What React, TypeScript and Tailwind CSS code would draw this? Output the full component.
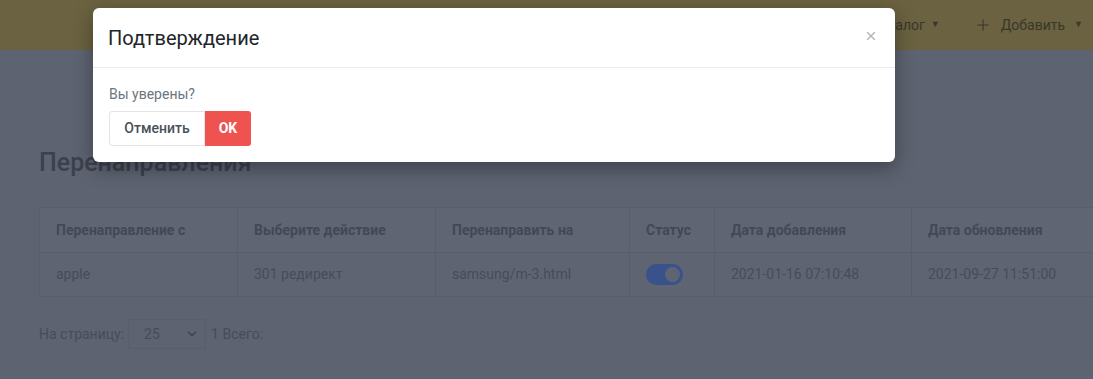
import { ChevronDown, Plus, X } from 'lucide-react';

const columns = [
  { title: 'Перенаправление с', w: 'w-[197px]' },
  { title: 'Выберите действие', w: 'w-[198px]' },
  { title: 'Перенаправить на', w: 'w-[194px]' },
  { title: 'Статус', w: 'w-[85px]' },
  { title: 'Дата добавления', w: 'w-[197px]' },
  { title: 'Дата обновления', w: 'w-[200px]' },
];

const Toggle = () => (
  <div className="w-[37px] h-[21px] rounded-full bg-[#39528c] flex items-center justify-end px-[3px]">
    <div className="w-[15px] h-[15px] rounded-full bg-[#5f6473]" />
  </div>
);

const App = () => {
  return (
    <div className="relative w-[1093px] h-[379px] overflow-hidden bg-[#5e6371] font-['Roboto',sans-serif]">
      {/* Navbar (dimmed) */}
      <div className="h-[50px] bg-[#6a6240] flex items-center justify-end pr-[10px] text-[14px] text-[#39382a]">
        <div className="flex items-center gap-[6px] mr-[34px]">
          <span>Каталог</span>
          <span className="text-[9px]">▼</span>
        </div>
        <div className="flex items-center gap-[9px]">
          <Plus className="w-[18px] h-[18px]" strokeWidth={1.5} />
          <span>Добавить</span>
          <span className="text-[9px]">▼</span>
        </div>
      </div>

      {/* Page content (dimmed) */}
      <div className="pl-[39px] pt-[98px]">
        <h1 className="text-[25px] leading-[30px] font-medium text-[#3c414e]">Перенаправления</h1>

        <div className="mt-[29px] border border-[#595e6c] w-max bg-[#606574]">
          <div className="flex border-b border-[#595e6c] h-[45px]">
            {columns.map((c, i) => (
              <div
                key={c.title}
                className={`${c.w} flex items-center px-[16px] text-[14px] font-bold text-[#434855] ${i > 0 ? 'border-l border-[#595e6c]' : ''}`}
              >
                {c.title}
              </div>
            ))}
          </div>
          <div className="flex h-[43px] bg-[#5f6472] text-[14px] text-[#474c59]">
            <div className={`${columns[0].w} flex items-center px-[16px]`}>apple</div>
            <div className={`${columns[1].w} flex items-center px-[16px] border-l border-[#595e6c]`}>301 редирект</div>
            <div className={`${columns[2].w} flex items-center px-[16px] border-l border-[#595e6c]`}>samsung/m-3.html</div>
            <div className={`${columns[3].w} flex items-center px-[16px] border-l border-[#595e6c]`}>
              <Toggle />
            </div>
            <div className={`${columns[4].w} flex items-center px-[16px] border-l border-[#595e6c]`}>2021-01-16 07:10:48</div>
            <div className={`${columns[5].w} flex items-center px-[16px] border-l border-[#595e6c]`}>2021-09-27 11:51:00</div>
          </div>
        </div>

        <div className="mt-[22px] flex items-center text-[14px] text-[#474c59]">
          <span>На страницу:</span>
          <div className="ml-[4px] w-[78px] h-[30px] border border-[#595e6c] flex items-center justify-between pl-[15px] pr-[6px]">
            <span>25</span>
            <ChevronDown className="w-[14px] h-[14px] text-[#3f4451]" strokeWidth={3} />
          </div>
          <span className="ml-[5px]">1 Всего:</span>
        </div>
      </div>

      {/* Modal */}
      <div className="absolute left-[93px] top-[8px] w-[802px] bg-white rounded-[6px] shadow-[0_6px_20px_rgba(0,0,0,0.35)]">
        <div className="h-[60px] flex items-center justify-between px-[15px] border-b border-[#e9ecef]">
          <h5 className="text-[20px] text-[#212529] font-normal">Подтверждение</h5>
          <X className="w-[14px] h-[14px] text-[#b5b5b5] mr-[2px] -mt-[4px]" strokeWidth={2.5} />
        </div>
        <div className="px-[16px] pt-[16px] pb-[16px]">
          <p className="text-[14px] leading-[21px] text-[#6c757d]">Вы уверены?</p>
          <div className="mt-[6px] flex">
            <button className="h-[35px] w-[96px] border border-[#e0e3e7] rounded-l-[3px] text-[14px] font-medium text-[#495057] bg-white">
              Отменить
            </button>
            <button className="h-[35px] w-[46px] rounded-r-[3px] bg-[#ef5350] text-[14px] font-bold text-white">
              OK
            </button>
          </div>
        </div>
      </div>
    </div>
  );
};

export default App;
